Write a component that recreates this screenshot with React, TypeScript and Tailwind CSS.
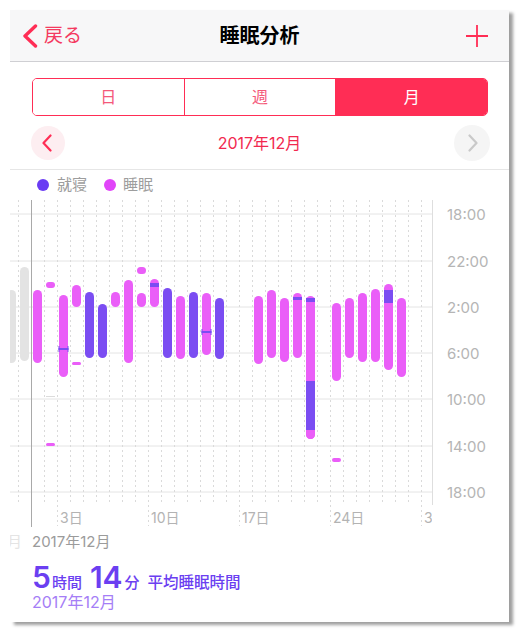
import React from 'react';

const RED = '#ff2d55';
const MAG = '#ea5ef8';
const PUR = '#7b4df2';
const GRAY = '#e3e3e3';

// [day, top, bottom, colour] in page pixels; day 0 / -1 belong to November
const bars: [number, number, number, string][] = [
  [-1, 290, 363, GRAY],
  [0, 267, 361, GRAY],
  [1, 290, 363, MAG],
  [2, 282, 288, MAG],
  [2, 443, 446, MAG],
  [3, 295, 377, MAG],
  [4, 285, 307, MAG],
  [4, 362, 365, MAG],
  [5, 292, 358, PUR],
  [6, 304, 358, PUR],
  [7, 292, 307, MAG],
  [8, 280, 363, MAG],
  [9, 267, 274, MAG],
  [9, 293, 307, MAG],
  [10, 279, 307, MAG],
  [11, 288, 358, PUR],
  [12, 296, 359, MAG],
  [13, 292, 358, PUR],
  [14, 293, 355, MAG],
  [15, 298, 359, PUR],
  [18, 296, 364, MAG],
  [19, 290, 358, MAG],
  [20, 298, 362, MAG],
  [21, 293, 358, MAG],
  [22, 296, 439, MAG],
  [24, 303, 381, MAG],
  [24, 458, 462, MAG],
  [25, 298, 358, MAG],
  [26, 293, 362, MAG],
  [27, 289, 362, MAG],
  [28, 284, 370, MAG],
  [29, 298, 377, MAG],
];

// in-bed stretches drawn over the sleep bars
const bands: [number, number, number][] = [
  [10, 283, 287],
  [21, 297, 300],
  [22, 298, 302],
  [22, 381, 430],
  [28, 290, 303],
];

const marks: [number, number][] = [
  [3, 349],
  [14, 332],
];

const hours = [
  { y: 214, t: '18:00' },
  { y: 261, t: '22:00' },
  { y: 307, t: '2:00' },
  { y: 353, t: '6:00' },
  { y: 399, t: '10:00' },
  { y: 446, t: '14:00' },
  { y: 492, t: '18:00' },
];

const weeks = [
  { x: 57, t: '3日' },
  { x: 148, t: '10日' },
  { x: 239, t: '17日' },
  { x: 330, t: '24日' },
  { x: 421, t: '3' },
];

const cx = (d: number) => 37.5 + (d - 1) * 13;

function SleepChart() {
  const dayLines: number[] = [];
  for (let x = 18; x <= 421; x += 13) {
    if (x !== 31) dayLines.push(x);
  }
  return (
    <svg width={499} height={330} viewBox="10 200 499 330" className="block shrink-0">
      {hours.map((h) => (
        <line key={h.y} x1={10} x2={432} y1={h.y} y2={h.y} stroke="#e4e4e4" strokeWidth={1} />
      ))}
      {dayLines.map((x) => {
        const week = (x - 57) % 91 === 0;
        return (
          <line
            key={x}
            x1={x + 0.5}
            x2={x + 0.5}
            y1={200}
            y2={week ? 526 : 502}
            stroke="#dadada"
            strokeWidth={1}
            strokeDasharray="2 3"
          />
        );
      })}
      <line x1={31.5} x2={31.5} y1={200} y2={527} stroke="#a9a9a9" strokeWidth={1} />
      <line x1={432.5} x2={432.5} y1={200} y2={505} stroke="#dedede" strokeWidth={1} />

      {bars.map(([d, y1, y2, c], i) => {
        const h = y2 - y1;
        return (
          <rect key={i} x={cx(d) - 4.5} y={y1} width={9} height={h} rx={Math.min(4.5, h / 2)} fill={c} />
        );
      })}
      {bands.map(([d, y1, y2], i) => (
        <rect key={i} x={cx(d) - 4.5} y={y1} width={9} height={y2 - y1} fill={PUR} />
      ))}
      <circle cx={cx(22)} cy={434.5} r={4.5} fill={MAG} />
      {marks.map(([d, y]) => (
        <g key={d} fill={PUR}>
          <rect x={cx(d) - 5} y={y - 1} width={10} height={2} />
          <rect x={cx(d) - 5} y={y - 3} width={1} height={6} />
          <rect x={cx(d) + 4} y={y - 3} width={1} height={6} />
        </g>
      ))}
      <rect x={46} y={396} width={9} height={1} fill="#dcdcdc" />

      {hours.map((h) => (
        <text key={h.y} x={447} y={h.y} dominantBaseline="central" fontSize={15} fill="#b5b5b5">
          {h.t}
        </text>
      ))}
      <svg x={10} y={500} width={422} height={30} viewBox="10 500 422 30">
        {weeks.map((w) => (
          <text key={w.x} x={w.x + 3} y={517} dominantBaseline="central" fontSize={14} fill="#b3b3b3">
            {w.t}
          </text>
        ))}
      </svg>
    </svg>
  );
}

function Chevron({ dir, color, className }: { dir: 'l' | 'r'; color: string; className: string }) {
  return (
    <svg viewBox="0 0 10 18" className={className} fill="none">
      <polyline
        points={dir === 'l' ? '8.5,1.5 1.5,9 8.5,16.5' : '1.5,1.5 8.5,9 1.5,16.5'}
        stroke={color}
        strokeWidth={2.2}
        strokeLinecap="round"
        strokeLinejoin="round"
      />
    </svg>
  );
}

export default function App() {
  const segments = ['日', '週', '月'];
  return (
    <div className="w-[520px] h-[633px] bg-white pt-[10px] pl-[10px] font-['Inter','Noto_Sans_CJK_JP',sans-serif]">
      <div className="w-[499px] h-[612px] bg-white flex flex-col overflow-hidden shadow-[4px_3px_3px_rgba(0,0,0,0.38)]">
        {/* nav bar */}
        <div className="h-[52px] shrink-0 bg-[#f7f7f8] border-b border-[#cfcfd3] flex items-center px-[12px] relative">
          <div className="flex items-center gap-[6px]">
            <svg viewBox="0 0 16 24" className="w-[16px] h-[24px]" fill="none">
              <polyline
                points="13.5,2 3,12 13.5,22"
                stroke={RED}
                strokeWidth={3.4}
                strokeLinecap="round"
                strokeLinejoin="round"
              />
            </svg>
            <span className="text-[19px] text-[#f43a60] leading-none">戻る</span>
          </div>
          <div className="absolute left-0 right-0 text-center text-[20px] font-bold text-black leading-none pointer-events-none">
            睡眠分析
          </div>
          <svg viewBox="0 0 24 24" className="ml-auto w-[24px] h-[24px] mr-[8px]" fill="none">
            <path d="M12 1v22M1 12h22" stroke={RED} strokeWidth={1.8} />
          </svg>
        </div>

        {/* segmented control */}
        <div className="mt-[16px] ml-[22px] w-[456px] h-[38px] shrink-0 flex rounded-[5px] border border-[#ff2d55] overflow-hidden">
          {segments.map((s, i) => (
            <div
              key={s}
              className={
                'flex-1 flex items-center justify-center text-[16px] ' +
                (i > 0 ? 'border-l border-[#ff2d55] ' : '') +
                (i === 2 ? 'bg-[#ff2d55] text-white' : 'bg-white text-[#f4587a]')
              }
            >
              {s}
            </div>
          ))}
        </div>

        {/* month stepper */}
        <div className="h-[54px] shrink-0 flex items-center border-b border-[#e6e6e6] pl-[21px] pr-[19px]">
          <div className="w-[34px] h-[34px] rounded-full bg-[#fdeef1] flex items-center justify-center">
            <Chevron dir="l" color={RED} className="w-[10px] h-[18px] -ml-[2px]" />
          </div>
          <div className="flex-1 text-center text-[16px] text-[#f2294f]">2017年12月</div>
          <div className="w-[36px] h-[36px] rounded-full bg-[#f5f5f5] flex items-center justify-center">
            <Chevron dir="r" color="#c9c9c9" className="w-[10px] h-[18px] ml-[2px]" />
          </div>
        </div>

        {/* legend */}
        <div className="h-[30px] shrink-0 flex items-center pl-[27px] text-[15px] text-[#9d9d9d]">
          <span className="w-[12px] h-[12px] rounded-full bg-[#6a3cf3]" />
          <span className="ml-[8px]">就寝</span>
          <span className="ml-[17px] w-[12px] h-[12px] rounded-full bg-[#e145f9]" />
          <span className="ml-[7px]">睡眠</span>
        </div>

        <SleepChart />

        {/* period label */}
        <div className="h-[22px] shrink-0 flex items-center text-[15px] leading-none">
          <div className="w-[12px] mr-[10px] overflow-hidden flex justify-end">
            <span className="shrink-0 whitespace-nowrap text-[#e4e4e4]">2017年11月</span>
          </div>
          <span className="text-[#9b9b9b]">2017年12月</span>
        </div>

        {/* summary */}
        <div className="mt-[10px] h-[30px] shrink-0 flex items-baseline pl-[22px] text-[#6b3ff1] leading-none">
          <span className="text-[30px] font-semibold">5</span>
          <span className="text-[15px] font-medium ml-[1px]">時間</span>
          <span className="text-[30px] font-semibold ml-[8px]">14</span>
          <span className="text-[15px] font-medium ml-[2px]">分</span>
          <span className="text-[15.5px] font-medium ml-[8px]">平均睡眠時間</span>
        </div>
        <div className="h-[20px] shrink-0 flex items-center pl-[22px] text-[16px] text-[#a57ef6] leading-none">
          2017年12月
        </div>
      </div>
    </div>
  );
}
